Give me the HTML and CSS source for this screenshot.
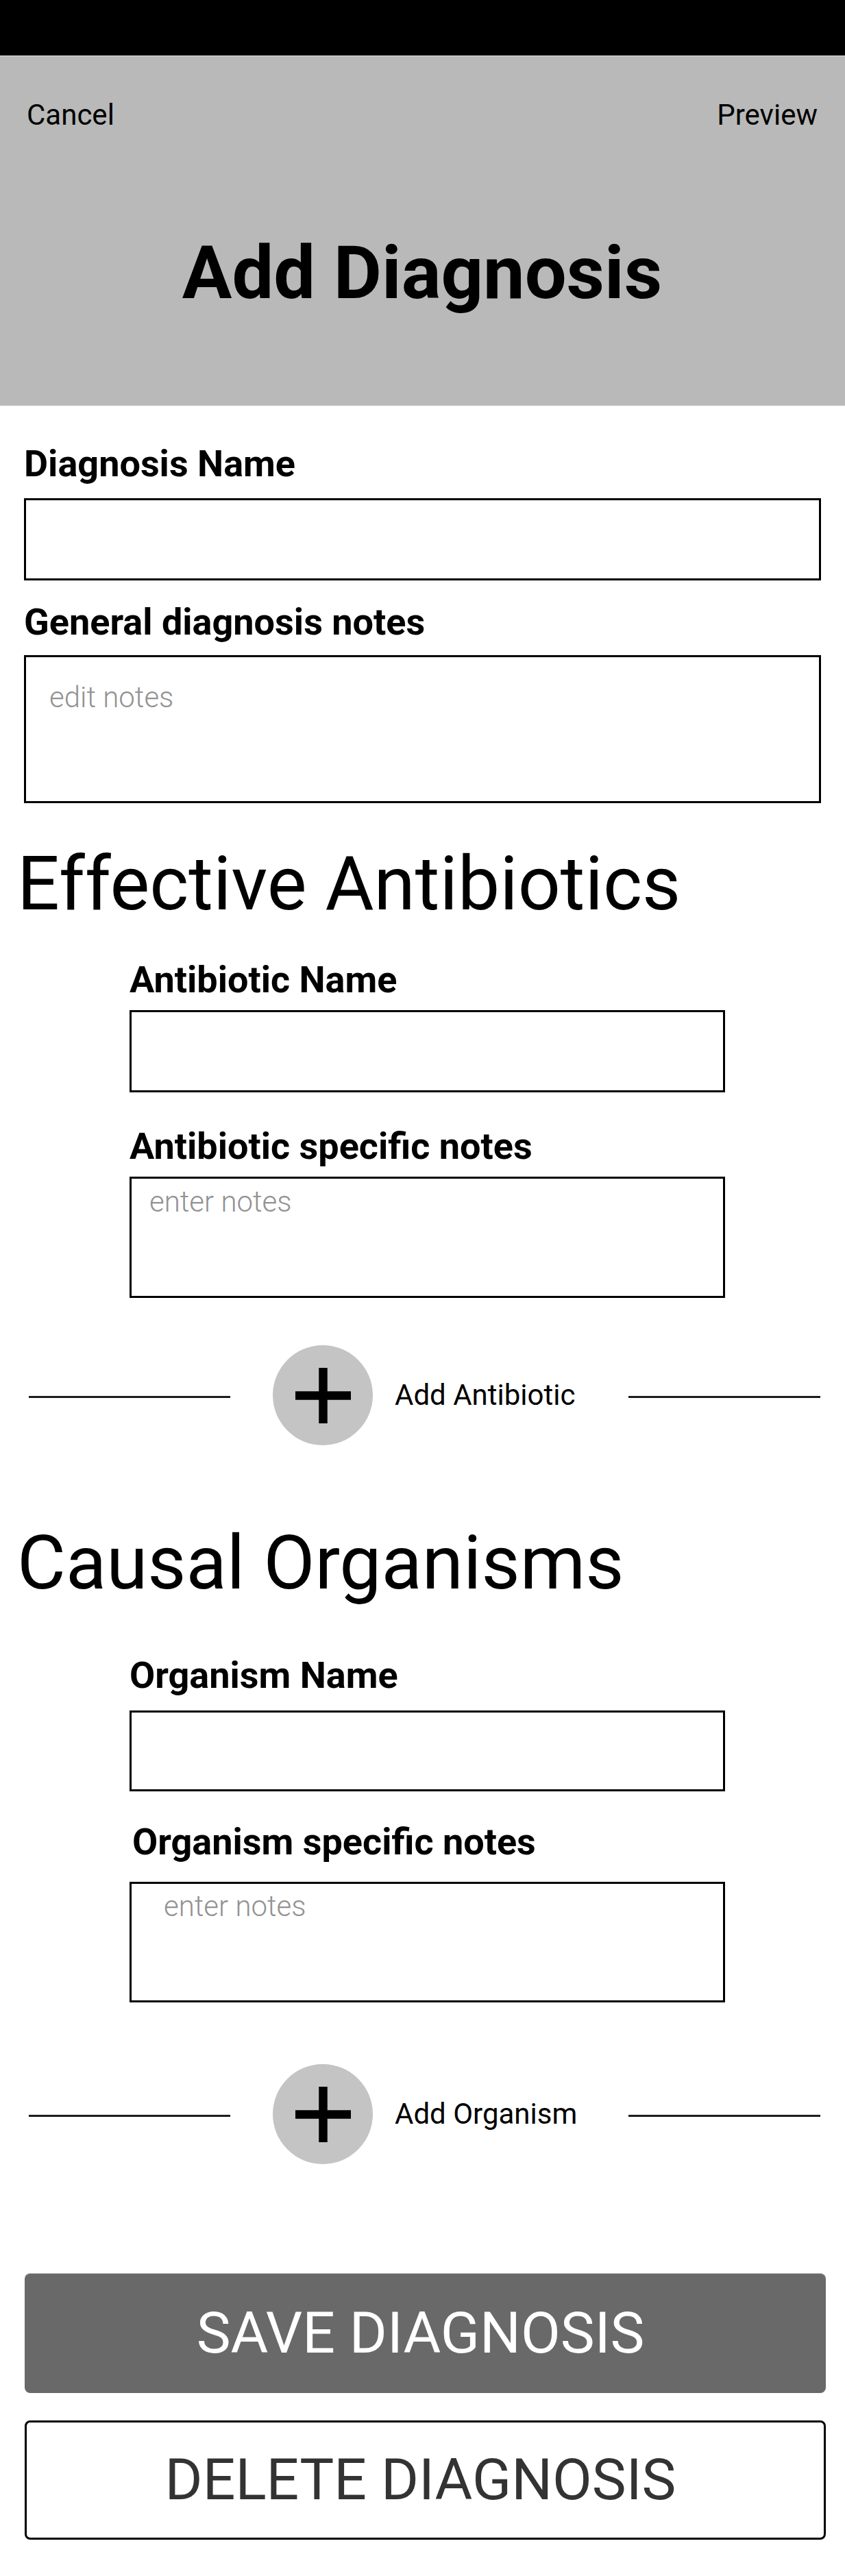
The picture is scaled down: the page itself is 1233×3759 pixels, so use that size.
FILE: index.html
```html
<!DOCTYPE html>
<html lang="en">
<head>
<meta charset="utf-8">
<title>Add Diagnosis</title>
<link rel="stylesheet" href="styles.css">
</head>
<body>
  <div class="statusbar"></div>
  <header class="appbar">
    <div class="appbar-actions">
      <span class="action">Cancel</span>
      <span class="action">Preview</span>
    </div>
    <h1 class="appbar-title">Add Diagnosis</h1>
  </header>

  <main class="form">
    <label class="label label-first" for="dx-name">Diagnosis Name</label>
    <input class="box box-input box-main input-first" id="dx-name" type="text">

    <label class="label label-notes" for="dx-notes">General diagnosis notes</label>
    <textarea class="box box-main area-general" id="dx-notes" placeholder="edit notes"></textarea>

    <h2 class="section-title section-antibiotics">Effective Antibiotics</h2>

    <label class="label sub sub-first" for="ab-name">Antibiotic Name</label>
    <input class="box box-input box-sub sub-input" id="ab-name" type="text">

    <label class="label sub sub-notes" for="ab-notes">Antibiotic specific notes</label>
    <textarea class="box box-sub area-ab" id="ab-notes" placeholder="enter notes"></textarea>

    <div class="add-row add-antibiotic">
      <span class="rule"></span>
      <button class="add-btn" type="button" aria-label="Add Antibiotic">
        <svg width="81" height="81" viewBox="0 0 81 81"><path d="M40.5 0V81M0 40.5H81" stroke="#000" stroke-width="12.5"/></svg>
      </button>
      <span class="add-text">Add Antibiotic</span>
      <span class="rule rule-right"></span>
    </div>

    <h2 class="section-title section-organisms">Causal Organisms</h2>

    <label class="label sub sub-first-org" for="org-name">Organism Name</label>
    <input class="box box-input box-sub sub-input-org" id="org-name" type="text">

    <label class="label sub sub-notes-org" for="org-notes">Organism specific notes</label>
    <textarea class="box box-sub area-org" id="org-notes" placeholder="enter notes"></textarea>

    <div class="add-row add-organism">
      <span class="rule"></span>
      <button class="add-btn" type="button" aria-label="Add Organism">
        <svg width="81" height="81" viewBox="0 0 81 81"><path d="M40.5 0V81M0 40.5H81" stroke="#000" stroke-width="12.5"/></svg>
      </button>
      <span class="add-text">Add Organism</span>
      <span class="rule rule-right"></span>
    </div>

    <button class="btn btn-save" type="button">SAVE DIAGNOSIS</button>
    <button class="btn btn-delete" type="button">DELETE DIAGNOSIS</button>
  </main>
</body>
</html>
```

FILE: styles.css
```css
* {
  box-sizing: border-box;
}

html, body {
  margin: 0;
  padding: 0;
  background: #fff;
}

body {
  width: 1233px;
  font-family: Roboto, "Noto Sans", "Liberation Sans", sans-serif;
  color: #000;
}

.statusbar {
  height: 82px;
  background: #000;
  border-bottom: 1px solid #e2e2e2;
}

.appbar {
  height: 510px;
  background: #b9b9b9;
  padding: 65px 40px 0 39px;
}

.appbar-actions {
  display: flex;
  justify-content: space-between;
  font-size: 42px;
  line-height: 1;
}

.appbar-title {
  margin: 155px 0 0;
  font-size: 108px;
  font-weight: 700;
  line-height: 1;
  text-align: center;
}

.form {
  display: flex;
  flex-direction: column;
  align-items: flex-start;
  padding-bottom: 53px;
}

.label {
  display: block;
  font-size: 54px;
  font-weight: 700;
  line-height: 1;
  margin-left: 35px;
}

.label-first { margin-top: 58px; }
.label-notes { margin-top: 34px; }

.box {
  display: block;
  border: 3px solid #000;
  border-radius: 0;
  background: #fff;
  font-family: Roboto, "Noto Sans", "Liberation Sans", sans-serif;
  font-size: 42px;
  font-weight: 300;
  line-height: 1;
  color: #000;
  resize: none;
  outline: none;
  margin: 0;
  appearance: none;
}

.box::placeholder {
  color: #929292;
  opacity: 1;
}

.box-main {
  width: 1163px;
  margin-left: 35px;
}

.box-sub {
  width: 869px;
  margin-left: 189px;
}

.box-input {
  height: 120px;
  padding: 0 20px;
}

.input-first { margin-top: 23px; }

.area-general {
  margin-top: 21px;
  height: 216px;
  padding: 38px 20px 0 34px;
}

.section-title {
  margin: 0 0 0 25px;
  font-size: 109px;
  font-weight: 400;
  line-height: 1;
}

.section-antibiotics { margin-top: 64px; }
.section-organisms { margin-top: 118px; }

.label.sub { margin-left: 189px; }

.sub-first { margin-top: 58px; }
.sub-input { margin-top: 17px; }
.sub-notes { margin-top: 52px; }

.area-ab {
  margin-top: 17px;
  height: 177px;
  padding: 13px 20px 0 26px;
}

.sub-first-org { margin-top: 82px; }
.sub-input-org { margin-top: 24px; height: 118px; }
.label.sub-notes-org { margin-top: 47px; margin-left: 193px; }

.area-org {
  margin-top: 31px;
  height: 176px;
  padding: 12px 20px 0 47px;
}

.add-row {
  display: flex;
  align-items: center;
  margin-left: 42px;
}

.add-antibiotic { margin-top: 69px; }
.add-organism { margin-top: 90px; }

.rule {
  display: block;
  width: 294px;
  height: 3px;
  background: #1c1c1c;
  margin-top: 4px;
}

.rule-right { width: 280px; }

.add-btn {
  width: 146px;
  height: 146px;
  margin-left: 62px;
  padding: 0;
  border: none;
  border-radius: 50%;
  background: #c4c4c4;
  display: flex;
  align-items: center;
  justify-content: center;
}

.add-btn svg { display: block; }

.add-text {
  width: 341px;
  margin-left: 32px;
  font-size: 42px;
  line-height: 1;
  color: #000;
}

.btn {
  display: block;
  width: 1169px;
  height: 175px;
  margin-left: 36px;
  border-radius: 8px;
  font-family: Roboto, "Noto Sans", "Liberation Sans", sans-serif;
  font-size: 84px;
  font-weight: 400;
  line-height: 1;
  text-align: center;
  padding: 0 14px 0 0;
}

.btn-save {
  margin-top: 159px;
  background: #696969;
  color: #fff;
  border: none;
  border-top: 1px solid #bdbdbd;
}

.btn-delete {
  margin-top: 40px;
  height: 174px;
  background: #fff;
  color: #333;
  border: 3px solid #000;
}
```
